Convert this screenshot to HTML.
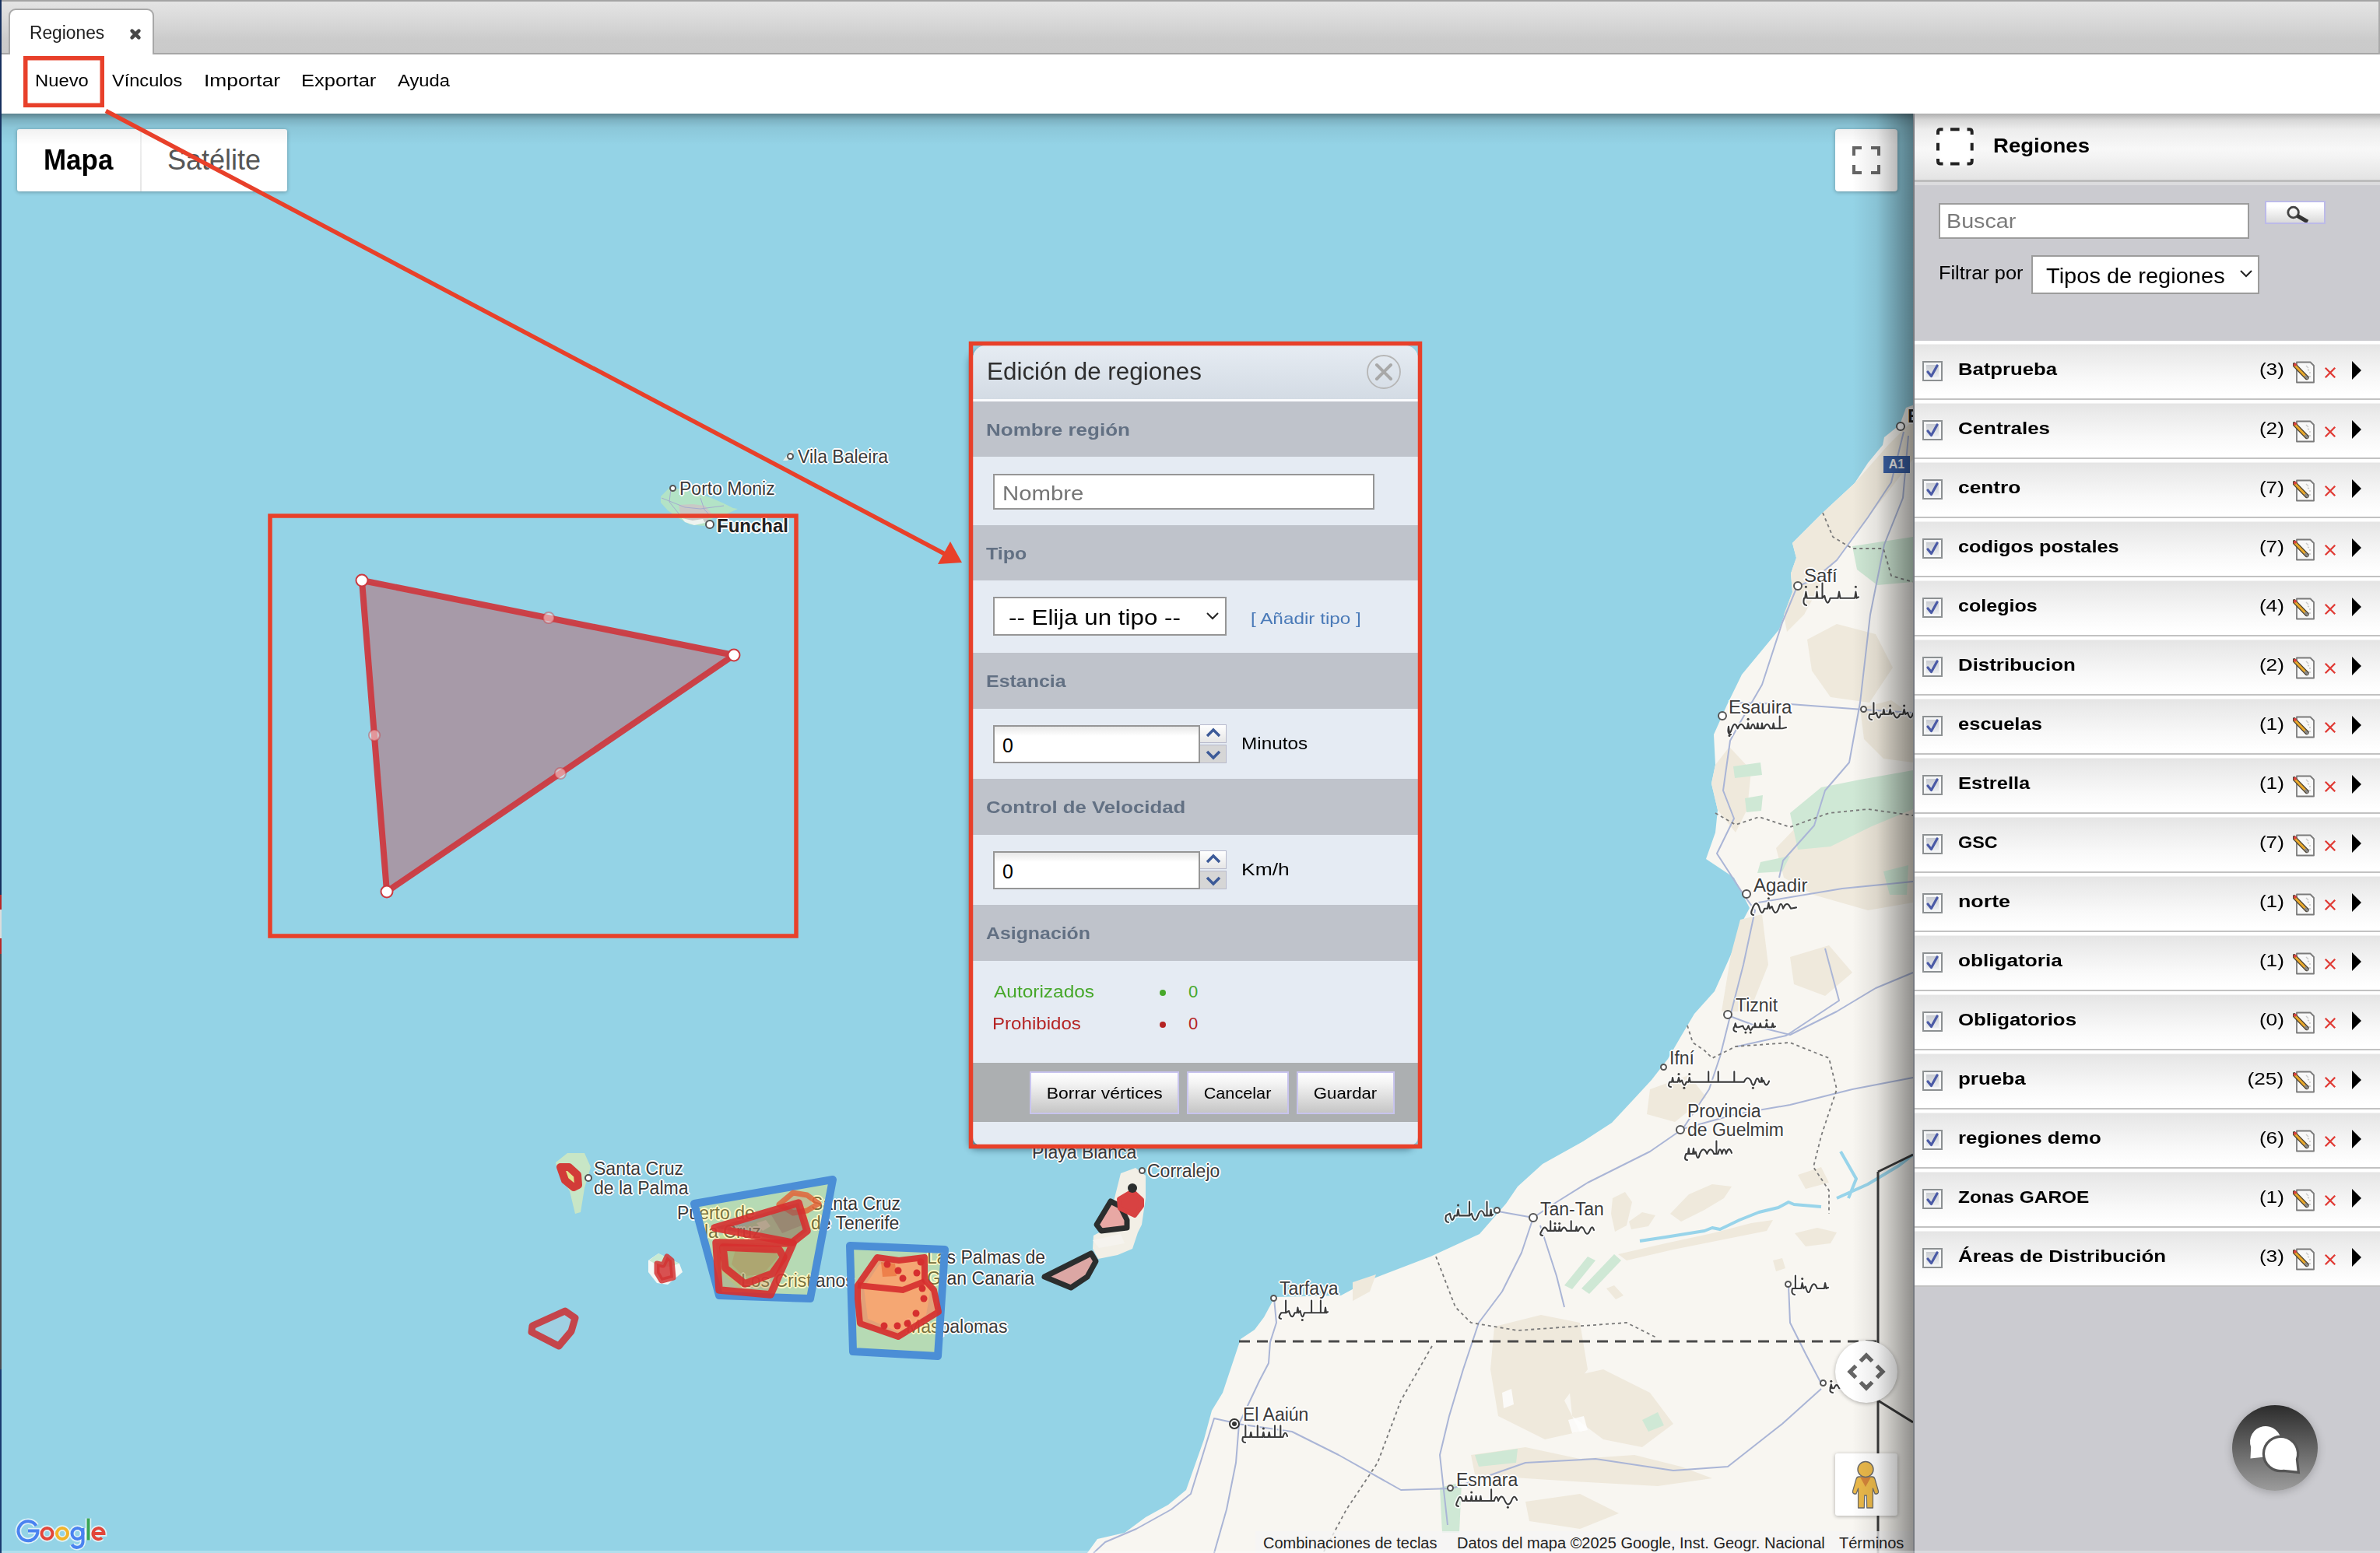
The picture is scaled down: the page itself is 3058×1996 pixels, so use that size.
<!DOCTYPE html>
<html><head><meta charset="utf-8">
<style>
*{margin:0;padding:0;box-sizing:border-box}
html,body{width:3058px;height:1996px;overflow:hidden;background:#fff;font-family:"Liberation Sans",sans-serif;position:relative;color:#000}
.a{position:absolute}
.t{position:absolute;white-space:nowrap;line-height:1}
.row{position:absolute;left:2460px;width:598px;height:76px;background:linear-gradient(#fff 0px,#fff 4px,#e5e5e5 5px,#ececec 20px,#f8f8f8 48px,#fff 70px);border-bottom:2px solid #c2c2c2}
.row .cb{position:absolute;left:10px;top:26px;width:26px;height:26px;border:2px solid #8c9092;background:#f4f5f6}
.row .cb i{position:absolute;left:3px;top:3px;width:16px;height:16px;background:linear-gradient(#c9ccd2,#eceef0)}
.row .cb svg{position:absolute;left:0;top:0}
.row .nm{position:absolute;left:55.5px;top:25.5px;font-size:22.5px;font-weight:bold;white-space:nowrap;line-height:1;transform:scaleX(1.156);transform-origin:0 0}
.row .ct{position:absolute;right:123.5px;top:26px;font-size:22px;white-space:nowrap;line-height:1;transform:scaleX(1.19);transform-origin:100% 0}
.row .ed{position:absolute;left:486px;top:26px}
.row .xx{position:absolute;left:526px;top:33px;width:16px;height:16px}
.row .ar{position:absolute;left:562px;top:26px;width:0;height:0;border-top:12.7px solid transparent;border-bottom:12.7px solid transparent;border-left:12px solid #000}
.band{position:absolute;left:1250px;width:572px;background:#bfc3cb}
.cont{position:absolute;left:1250px;width:572px;background:#e5ebf3}
.lbl{position:absolute;left:1267px;font-size:22px;font-weight:bold;color:#627083;white-space:nowrap;line-height:1}
.btn{position:absolute;top:1377px;height:55px;border:2px solid #c8c4ee;background:linear-gradient(#fff 0%,#f4f4f4 25%,#c6c6c6 100%);font-size:21px;text-align:center;line-height:51px;color:#000;white-space:nowrap}
.ml{position:absolute;white-space:nowrap;line-height:1;font-size:23px;color:#3a3a3a;text-shadow:-2px 0 #fff,2px 0 #fff,0 -2px #fff,0 2px #fff,-1px -1px #fff,1px 1px #fff,-1px 1px #fff,1px -1px #fff}
.mlb{font-weight:bold;color:#222}
.dot{position:absolute;width:10px;height:10px;border:2px solid #555;border-radius:50%;background:#fff}
</style></head><body>
<div class="a" style="left:0;top:0;width:2px;height:1996px;background:linear-gradient(#17305e 0,#17305e 1150px,#b82828 1150px,#b82828 1169px,#dcdcdc 1169px,#dcdcdc 1206px,#b82828 1206px,#b82828 1226px,#4a4a50 1226px,#4a4a50 1760px,#1a3a70 1760px);z-index:50"></div>
<div class="a" style="left:2px;top:0;width:3056px;height:70px;background:linear-gradient(#e4e4e4,#d6d6d6 45%,#cbcbcb 75%,#cacaca);border-top:2px solid #a4a4a4;border-bottom:2px solid #a6a6a6;border-right:2px solid #aaa"></div>
<div class="a" style="left:11px;top:11px;width:187px;height:61px;background:#fff;border:2px solid #a8a8a8;border-bottom:none;border-radius:9px 9px 0 0"></div>
<div class="t" style="transform:scaleX(0.969);transform-origin:0 0;left:38px;top:31px;font-size:23.5px;color:#1e1e1e">Regiones</div>
<svg class="a" style="left:165px;top:35px;filter:blur(.45px)" width="18" height="18" viewBox="0 0 18 18"><path d="M4.6 4.6L13.4 13.4M13.4 4.6L4.6 13.4" stroke="#474747" stroke-width="4.6" stroke-linecap="round"/></svg>
<div class="a" style="left:2px;top:70px;width:3056px;height:76px;background:#fff"></div>
<div class="t" style="transform:scaleX(1.081);transform-origin:0 0;left:45px;top:93px;font-size:22px">Nuevo</div>
<div class="t" style="transform:scaleX(1.071);transform-origin:0 0;left:144px;top:93px;font-size:22px">Vínculos</div>
<div class="t" style="transform:scaleX(1.198);transform-origin:0 0;left:262px;top:93px;font-size:22px">Importar</div>
<div class="t" style="transform:scaleX(1.159);transform-origin:0 0;left:387px;top:93px;font-size:22px">Exportar</div>
<div class="t" style="transform:scaleX(1.079);transform-origin:0 0;left:511px;top:93px;font-size:22px">Ayuda</div>
<div id="map" class="a" style="left:2px;top:146px;width:2458px;height:1850px;background:#94d3e6;overflow:hidden">
<svg class="a" style="left:0;top:0" width="2458" height="1850" viewBox="2 146 2458 1850">
<!-- Africa land -->
<path fill="#f8f6f1" d="M2460 520 L2449 524 L2441 546 L2421 562 L2419 572 L2400 595 L2383 621 L2342 659 L2303 698 L2308 717 L2301 737 L2303 761 L2286 809 L2238 867 L2219 906 L2202 944 L2204 983 L2199 1007 L2207 1041 L2204 1070 L2192 1104 L2228 1128 L2248 1167 L2240 1182 L2236 1200 L2224 1227 L2203 1274 L2177 1303 L2161 1330 L2143 1361 L2122 1388 L2098 1414 L2071 1443 L2034 1467 L1982 1496 L1950 1525 L1935 1547 L1901 1586 L1838 1615 L1760 1645 L1723 1665 L1638 1667 L1624 1693 L1612 1709 L1594 1721 L1584 1751 L1571 1790 L1557 1813 L1547 1850 L1524 1915 L1501 1934 L1472 1950 L1445 1970 L1410 1978 L1397 1996 L2460 1996 Z"/>
<!-- beige patches -->
<g fill="#efe9dc">
<path d="M2303 698 L2342 659 L2383 621 L2426 572 L2458 540 L2458 590 L2420 640 L2380 690 L2345 740 L2318 790 L2296 812 L2292 790 L2303 761 L2301 737 L2308 717 Z"/>
<path d="M2322 822 L2360 802 L2410 815 L2432 858 L2402 903 L2352 896 L2328 862 Z"/>
<path d="M2390 910 L2430 900 L2458 920 L2458 980 L2420 975 L2395 950 Z"/>
<path d="M2204 983 L2222 960 L2250 990 L2245 1040 L2230 1070 L2207 1041 L2199 1007 Z"/>
<path d="M2282 1090 L2330 1040 L2400 1052 L2458 1030 L2458 1160 L2400 1170 L2330 1150 L2292 1128 Z"/>
<path d="M2236 1182 L2264 1175 L2272 1240 L2248 1300 L2212 1300 L2224 1227 Z"/>
<path d="M2300 1230 L2350 1215 L2380 1250 L2345 1280 L2305 1265 Z"/>
<path d="M2120 1400 L2170 1382 L2192 1410 L2152 1442 L2116 1432 Z"/>
<path d="M2146 1560 L2170 1535 L2200 1522 L2225 1525 L2215 1540 L2190 1555 L2160 1570 Z"/>
<path d="M2093 1570 L2110 1558 L2127 1562 L2118 1576 L2096 1580 Z"/>
<path d="M2072 1540 L2088 1532 L2097 1545 L2090 1575 L2075 1583 L2070 1560 Z"/>
<path d="M2306 1585 L2335 1578 L2360 1584 L2352 1598 L2320 1602 Z"/>
<path d="M2278 1620 L2290 1617 L2294 1630 L2282 1634 Z"/>
<path d="M2064 1656 L2074 1652 L2086 1665 L2076 1670 Z"/>
<path d="M2079 1612 L2140 1598 L2200 1585 L2250 1572 L2278 1568 L2270 1582 L2220 1592 L2150 1606 L2090 1620 Z"/>
<path d="M2310 1510 L2340 1500 L2350 1520 L2320 1528 Z"/>
<path d="M1738 1648 L1768 1638 L1760 1660 L1738 1672 Z"/>
<path d="M1920 1705 L1980 1690 L2030 1700 L2040 1760 L2010 1800 L2030 1840 L1985 1850 L1925 1820 L1915 1760 Z"/>
<path d="M2015 1770 L2060 1760 L2120 1790 L2150 1830 L2110 1860 L2060 1850 L2020 1820 Z"/>
<path d="M1890 1870 L1960 1860 L2030 1875 L2100 1870 L2160 1885 L2200 1900 L2130 1910 L2040 1905 L1960 1900 L1895 1895 Z"/>
<path d="M1960 1930 L2030 1920 L2080 1945 L2030 1965 L1965 1955 Z"/>

</g>
<g fill="#ffffff" opacity=".8">
<path d="M1930 1790 L1942 1785 L1945 1805 L1932 1810 Z"/>
<path d="M2015 1825 L2035 1820 L2040 1838 L2020 1842 Z"/>
</g>
<!-- green patches -->
<g fill="#cfe8d5">
<path d="M2380 702 L2458 690 L2458 748 L2412 752 L2386 732 Z"/>
<path d="M2227 985 L2262 980 L2264 996 L2229 1000 Z"/>
<path d="M2242 1026 L2265 1022 L2263 1042 L2244 1044 Z"/>
<path d="M2300 1045 L2340 1012 L2390 1002 L2458 990 L2458 1040 L2405 1062 L2352 1088 L2310 1092 Z"/>
<path d="M2262 1108 L2300 1100 L2290 1120 L2258 1122 Z"/>
<path d="M2420 1120 L2452 1112 L2450 1150 L2428 1150 Z"/>
<path d="M2010 1652 L2040 1615 L2050 1620 L2020 1657 Z"/>
<path d="M2032 1656 L2074 1612 L2083 1620 L2042 1663 Z"/>
<path d="M1850 1912 L1878 1905 L1875 1970 L1853 1970 Z"/>
<path d="M1895 1870 L1950 1862 L1948 1880 L1900 1885 Z"/>
<path d="M2110 1825 L2130 1815 L2138 1832 L2118 1840 Z"/>
</g>
<!-- roads -->
<g fill="none" stroke="#aab5d6" stroke-width="2" stroke-linejoin="round">
<path d="M2446 555 L2430 620 L2400 665 L2360 720 L2330 745 L2309 754 L2290 800 L2264 880 L2235 930 L2223 952 L2214 1016 L2228 1052 L2206 1097 L2241 1151 L2255 1170 L2240 1240 L2222 1310 L2210 1358 L2196 1400 L2162 1451"/>
<path d="M2452 560 L2445 640 L2421 700 L2403 790 L2390 903 L2376 980 L2345 1016 L2331 1061 L2291 1106 L2286 1128"/>
<path d="M2223 903 L2300 905 L2394 912 L2458 916"/>
<path d="M2259 1160 L2367 1142 L2458 1133"/>
<path d="M2345 1219 L2363 1286 L2295 1331 L2232 1345"/>
<path d="M2220 1305 L2260 1320 L2300 1330 L2360 1300 L2410 1270 L2458 1250"/>
<path d="M2162 1451 L2120 1480 L2080 1500 L2040 1520 L2000 1545 L1970 1565 L1925 1557"/>
<path d="M2162 1451 L2230 1432 L2300 1420 L2380 1400 L2458 1385"/>
<path d="M1970 1565 L1955 1610 L1930 1660 L1900 1700 L1880 1760 L1862 1820 L1850 1870 L1860 1960"/>
<path d="M1637 1669 L1640 1700 L1632 1725 L1630 1752 L1618 1775 L1610 1792 L1592 1830 L1588 1880 L1576 1940 L1560 1996"/>
<path d="M1592 1830 L1560 1823 L1550 1855 L1530 1920 L1505 1940 L1460 1965 L1420 1982 L1405 1996"/>
<path d="M1590 1830 L1660 1840 L1720 1870 L1800 1915 L1866 1913"/>
<path d="M1866 1913 L1960 1880 L2050 1875 L2150 1890 L2220 1885 L2290 1830 L2340 1785"/>
<path d="M2298 1651 L2300 1700 L2320 1740 L2340 1778"/>
<path d="M1979 1575 L2000 1640 L2010 1680"/>
</g>
<!-- rivers -->
<g fill="none" stroke="#98d4ea" stroke-width="4" stroke-linejoin="round">
<path d="M2107 1595 L2140 1590 L2190 1582 L2200 1578 L2210 1580 L2235 1568 L2260 1558 L2285 1552 L2298 1545 L2305 1548 L2340 1551 M2365 1480 L2385 1515 L2375 1540 M2360 1540 L2400 1522 L2440 1498 L2458 1484"/>
</g>
<!-- dotted borders -->
<g fill="none" stroke="#7a7a7a" stroke-width="1.8" stroke-dasharray="4 4">
<path d="M2342 659 L2355 690 L2380 705 L2420 705 L2430 740 L2458 748"/>
<path d="M2204 1045 L2230 1060 L2260 1050 L2300 1063 L2350 1045 L2400 1040 L2458 1048"/>
<path d="M2168 1318 L2175 1340 L2190 1350 L2200 1360 L2230 1345 L2300 1340 L2350 1360 L2360 1400 L2340 1460 L2330 1500 L2350 1530 L2350 1560"/>
<path d="M1845 1615 L1870 1680 L1890 1700 L1950 1710 L2020 1705 L2090 1700 L2130 1720"/>
<path d="M1840 1730 L1800 1800 L1770 1880 L1730 1940 L1700 1996"/>
</g>
<!-- dashed national border -->
<path d="M1592 1724 L2413 1724" stroke="#4a4a4a" stroke-width="3" stroke-dasharray="14 9" fill="none"/>
<path d="M2413 1506 L2413 1996" stroke="#3a3a3a" stroke-width="3" fill="none"/>
<path d="M2413 1506 L2458 1484" stroke="#3a3a3a" stroke-width="3" fill="none"/>
<path d="M2413 1800 L2458 1828" stroke="#3a3a3a" stroke-width="3" fill="none"/>

<!-- Madeira + Porto Santo -->
<path fill="#b3e3c6" d="M849 638 L861 626 L880 630 L900 635 L914 640 L930 647 L942 653 L948 654 L935 660 L916 666 L905 676 L886 674 L872 666 L858 656 L849 646 Z"/>
<path fill="#c9c9c6" d="M872 649 L890 648 L906 650 L914 660 L908 671 L895 673 L882 668 L874 660 Z"/>
<path fill="#eef3f0" d="M876 666 L890 669 L903 667 L906 672 L892 675 L880 671 Z"/>
<path fill="none" stroke="#a4acd0" stroke-width="1" d="M850 640 L880 652 L900 654 L930 650 M862 628 L860 645 L872 660 M900 640 L905 655 L915 665"/>
<path fill="#e8efe8" d="M1006 592 L1012 584 L1018 578 L1020 582 L1012 592 Z"/>
<!-- Canary islands land -->
<path fill="#c8e6c6" d="M714 1494 L729 1482 L751 1482 L759 1500 L751 1527 L746 1558 L739 1560 L732 1531 L716 1504 Z"/>
<path fill="#f4f8f6" d="M833 1620 L846 1611 L873 1624 L877 1635 L858 1651 L844 1649 L833 1635 Z"/><path fill="#c8ead2" d="M834 1620 L846 1611 L873 1624 L860 1628 L845 1626 Z"/>
<path fill="#f2efe6" d="M1440 1508 L1459 1501 L1472 1511 L1472 1540 L1467 1574 L1462 1584 L1455 1605 L1436 1613 L1411 1618 L1404 1605 L1405 1588 L1418 1581 L1431 1544 Z"/>
<path fill="#f5f3ee" d="M1404 1594 L1440 1586 L1445 1598 L1412 1604 Z"/>

<path fill="#a9d9bb" d="M925 1588 L975 1568 L1020 1548 L1042 1552 L1032 1586 L1002 1610 L988 1642 L950 1656 L922 1632 Z"/>
<path fill="#b49a80" opacity=".7" d="M945 1606 L990 1602 L1000 1615 L980 1638 L955 1640 L940 1625 Z"/>
<path fill="#8a6878" opacity=".5" d="M990 1560 L1025 1552 L1030 1575 L1005 1585 Z"/>
<path fill="#e9f2e9" d="M972 1572 l12 -4 l6 8 l-10 6 z"/>
<path fill="#dcecd6" d="M1110 1655 L1130 1625 L1180 1620 L1195 1660 L1190 1690 L1155 1712 L1115 1695 Z"/>
</svg>
</div>
<!-- map labels -->
<div class="dot" style="left:1011px;top:582px;width:9px;height:9px"></div>
<div class="ml" style="left:1025px;top:576px">Vila Baleira</div>
<div class="dot" style="left:860px;top:623px;width:9px;height:9px"></div>
<div class="ml" style="left:873px;top:617px">Porto Moniz</div>
<div class="dot" style="left:906px;top:668px;width:12px;height:12px"></div>
<div class="ml mlb" style="left:921px;top:664px;font-size:24px">Funchal</div>
<div class="dot" style="left:751px;top:1509px;width:10px;height:10px"></div>
<div class="ml" style="left:763px;top:1491px">Santa Cruz</div>
<div class="ml" style="left:763px;top:1516px">de la Palma</div>
<div class="ml" style="left:870px;top:1548px">Puerto de</div>
<div class="ml" style="left:905px;top:1572px">la Cruz</div>
<div class="ml" style="left:1042px;top:1536px;color:#333">Santa Cruz</div>
<div class="ml" style="left:1042px;top:1561px;color:#333">de Tenerife</div>
<div class="ml" style="left:952px;top:1635px">Los Cristianos</div>
<div class="ml" style="left:1191px;top:1605px;color:#333">Las Palmas de</div>
<div class="ml" style="left:1191px;top:1632px;color:#333">Gran Canaria</div>
<div class="ml" style="left:1164px;top:1694px">Maspalomas</div>
<div class="ml" style="left:1326px;top:1470px">Playa Blanca</div>
<div class="dot" style="left:1463px;top:1500px;width:9px;height:9px"></div>
<div class="ml" style="left:1474px;top:1494px">Corralejo</div>

<div class="dot" style="left:2304px;top:747px;width:12px;height:12px"></div>
<div class="ml" style="left:2318px;top:728px;font-size:24px">Safí</div>
<div class="dot" style="left:2207px;top:914px;width:12px;height:12px"></div>
<div class="ml" style="left:2221px;top:897px;font-size:24px">Esauira</div>
<div class="dot" style="left:2238px;top:1143px;width:12px;height:12px"></div>
<div class="ml" style="left:2253px;top:1126px;font-size:24px">Agadir</div>
<div class="dot" style="left:2214px;top:1298px;width:12px;height:12px"></div>
<div class="ml" style="left:2230px;top:1281px">Tiznit</div>
<div class="dot" style="left:2133px;top:1367px;width:9px;height:9px"></div>
<div class="ml" style="left:2145px;top:1349px">Ifní</div>
<div class="ml" style="left:2168px;top:1417px">Provincia</div>
<div class="dot" style="left:2153px;top:1446px;width:12px;height:12px"></div>
<div class="ml" style="left:2168px;top:1441px">de Guelmim</div>
<div class="dot" style="left:1964px;top:1559px;width:12px;height:12px"></div>
<div class="ml" style="left:1979px;top:1543px">Tan-Tan</div>
<div class="dot" style="left:1919px;top:1551px;width:9px;height:9px"></div>
<div class="dot" style="left:1632px;top:1664px;width:9px;height:9px"></div>
<div class="ml" style="left:1644px;top:1645px">Tarfaya</div>
<div class="a" style="left:1579px;top:1823px;width:14px;height:14px;border:2px solid #333;border-radius:50%;background:#fff"><div class="a" style="left:2px;top:2px;width:6px;height:6px;border-radius:50%;background:#333"></div></div>
<div class="ml" style="left:1597px;top:1807px">El Aaiún</div>
<div class="dot" style="left:1859px;top:1908px;width:9px;height:9px"></div>
<div class="ml" style="left:1871px;top:1891px">Esmara</div>
<div class="dot" style="left:2293px;top:1646px;width:9px;height:9px"></div>
<div class="dot" style="left:2338px;top:1773px;width:9px;height:9px"></div>
<div class="dot" style="left:2390px;top:907px;width:9px;height:9px"></div>
<div class="dot" style="left:2436px;top:542px;width:12px;height:12px"></div>
<div class="ml mlb" style="left:2451px;top:523px;font-size:24px">E</div>
<div class="a" style="left:2420px;top:586px;width:34px;height:22px;background:#3b62a8;color:#f4f4f4;font-size:16px;font-weight:bold;line-height:22px;text-align:center">A1</div>
<!-- arabic -->
<svg class="a" style="left:0;top:0" width="3058" height="1996">
<path d="M2388.0 767.3 L2385.6 768.7 L2384.4 760.6 L2383.2 768.7 L2380.0 768.7 L2372.7 768.7 L2367.3 768.7 L2364.5 768.7 L2363.0 760.6 L2361.6 768.7 L2357.8 768.7 L2351.6 768.7 Q2347.9 781.8 2344.3 765.8 L2341.5 768.7 M2341.5 768.7 L2341.5 749.6 M2341.5 768.7 L2337.3 768.7 L2335.4 768.7 L2334.5 760.6 L2333.6 768.7 L2331.1 768.7 L2324.2 768.7 L2321.7 768.7 L2320.4 760.6 L2319.2 768.7 L2318.0 768.7 Q2316.0 777.4 2321.0 778.0 M2295.0 935.1 L2289.8 936.3 L2286.7 936.3 M2286.7 936.3 L2286.7 920.5 M2286.7 936.3 L2281.9 936.3 L2279.8 936.3 L2278.7 929.6 L2277.6 936.3 L2274.6 936.3 Q2270.5 925.5 2266.4 936.3 L2264.8 936.3 L2264.0 929.6 L2263.3 936.3 L2261.2 936.3 L2259.3 936.3 L2258.4 929.6 L2257.4 936.3 L2254.9 936.3 Q2252.3 925.5 2249.7 936.3 L2247.3 936.3 L2246.1 929.6 L2244.9 936.3 L2241.7 936.3 Q2237.1 925.5 2232.6 936.3 Q2228.9 925.5 2225.3 936.3 Q2222.0 947.1 2221.0 933.9 Q2219.0 943.5 2224.0 944.0 M2308.0 1166.4 L2300.9 1167.7 Q2296.0 1156.0 2291.1 1167.7 Q2288.2 1156.0 2285.3 1167.7 Q2281.0 1179.4 2276.7 1165.1 L2273.9 1167.7 L2272.4 1160.4 L2271.0 1167.7 L2267.1 1167.7 Q2263.6 1179.4 2260.0 1165.1 Q2255.9 1156.0 2251.8 1167.7 Q2248.0 1175.5 2253.0 1176.0 M2458.0 916.9 Q2454.5 927.9 2451.1 915.8 L2448.1 918.0 L2446.6 911.8 L2445.1 918.0 L2441.1 918.0 Q2436.9 927.9 2432.7 915.8 L2430.0 918.0 L2428.6 911.8 L2427.3 918.0 L2423.7 918.0 L2421.5 918.0 L2420.4 911.8 L2419.3 918.0 L2416.4 918.0 Q2413.7 927.9 2410.9 915.8 L2407.4 918.0 M2407.4 918.0 L2407.4 903.4 M2407.4 918.0 L2402.2 918.0 Q2400.0 924.6 2405.0 925.0 M2281.0 1319.3 L2278.8 1320.2 L2277.7 1315.2 L2276.6 1320.2 L2273.7 1320.2 L2271.1 1320.2 L2269.9 1315.2 L2268.6 1320.2 L2265.2 1320.2 L2262.9 1320.2 L2261.8 1315.2 L2260.6 1320.2 L2257.6 1320.2 L2255.8 1320.2 L2255.0 1315.2 L2254.1 1320.2 L2251.8 1320.2 Q2249.2 1328.3 2246.5 1318.4 Q2242.9 1328.3 2239.3 1318.4 L2233.8 1320.2 L2231.2 1320.2 L2229.8 1315.2 L2228.5 1320.2 L2228.0 1320.2 Q2226.0 1325.6 2231.0 1326.0 M2273.0 1389.6 Q2269.4 1399.6 2265.9 1388.6 L2264.3 1390.6 L2263.5 1385.0 L2262.7 1390.6 L2260.6 1390.6 Q2258.0 1381.6 2255.3 1390.6 Q2252.4 1399.6 2249.5 1388.6 Q2245.2 1381.6 2240.9 1390.6 L2232.3 1390.6 L2228.3 1390.6 M2228.3 1390.6 L2228.3 1377.4 M2228.3 1390.6 L2222.4 1390.6 L2215.4 1390.6 L2209.9 1390.6 L2207.7 1390.6 M2207.7 1390.6 L2207.7 1377.4 M2207.7 1390.6 L2204.2 1390.6 L2198.0 1390.6 L2195.2 1390.6 M2195.2 1390.6 L2195.2 1377.4 M2195.2 1390.6 L2191.1 1390.6 L2181.6 1390.6 L2174.1 1390.6 L2171.8 1390.6 L2170.7 1385.0 L2169.6 1390.6 L2166.7 1390.6 Q2163.9 1399.6 2161.0 1388.6 L2158.4 1390.6 L2157.0 1385.0 L2155.7 1390.6 L2152.2 1390.6 L2150.1 1390.6 L2149.1 1385.0 L2148.1 1390.6 L2145.4 1390.6 Q2142.0 1396.6 2147.0 1397.0 M2225.0 1481.8 Q2221.5 1471.8 2217.9 1483.0 Q2215.2 1471.8 2212.5 1483.0 Q2209.9 1471.8 2207.4 1483.0 L2205.4 1483.0 M2205.4 1483.0 L2205.4 1466.5 M2205.4 1483.0 L2202.3 1483.0 Q2197.8 1471.8 2193.3 1483.0 Q2188.7 1471.8 2184.0 1483.0 Q2181.4 1494.2 2178.8 1480.5 L2176.9 1483.0 L2176.0 1476.0 L2175.0 1483.0 L2172.5 1483.0 L2170.7 1483.0 L2169.8 1476.0 L2168.9 1483.0 L2166.4 1483.0 Q2163.0 1490.5 2168.0 1491.0 M2048.0 1581.0 Q2045.4 1573.4 2042.7 1581.9 Q2038.9 1590.5 2035.2 1580.0 Q2031.6 1573.4 2028.1 1581.9 L2026.4 1581.9 L2025.5 1576.6 L2024.7 1581.9 L2022.3 1581.9 L2018.7 1581.9 M2018.7 1581.9 L2018.7 1569.4 M2018.7 1581.9 L2013.2 1581.9 Q2009.6 1573.4 2006.0 1581.9 L2004.4 1581.9 L2003.7 1576.6 L2002.9 1581.9 L2000.8 1581.9 L1999.0 1581.9 L1998.0 1576.6 L1997.1 1581.9 L1994.6 1581.9 L1992.2 1581.9 M1992.2 1581.9 L1992.2 1569.4 M1992.2 1581.9 L1988.5 1581.9 Q1984.8 1573.4 1981.0 1581.9 Q1977.0 1587.6 1982.0 1588.0 M1918.0 1561.0 L1916.4 1562.4 L1915.6 1554.8 L1914.7 1562.4 L1912.6 1562.4 L1910.5 1562.4 M1910.5 1562.4 L1910.5 1544.5 M1910.5 1562.4 L1907.5 1562.4 Q1903.2 1550.2 1898.9 1562.4 Q1894.8 1574.5 1890.8 1559.7 L1888.0 1562.4 M1888.0 1562.4 L1888.0 1544.5 M1888.0 1562.4 L1883.9 1562.4 L1877.4 1562.4 L1874.8 1562.4 L1873.5 1554.8 L1872.2 1562.4 L1868.8 1562.4 Q1865.8 1574.5 1862.9 1559.7 L1858.0 1562.4 Q1856.0 1570.5 1861.0 1571.0 M1706.0 1686.1 L1704.0 1687.3 L1703.0 1680.6 L1702.1 1687.3 L1699.4 1687.3 L1696.9 1687.3 M1696.9 1687.3 L1696.9 1671.5 M1696.9 1687.3 L1693.0 1687.3 L1687.5 1687.3 L1685.1 1687.3 M1685.1 1687.3 L1685.1 1671.5 M1685.1 1687.3 L1681.6 1687.3 L1675.9 1687.3 Q1673.3 1698.1 1670.6 1684.9 L1668.5 1687.3 L1667.4 1680.6 L1666.4 1687.3 L1663.5 1687.3 Q1659.8 1698.1 1656.0 1684.9 L1652.1 1687.3 M1652.1 1687.3 L1652.1 1671.5 M1652.1 1687.3 L1646.1 1687.3 Q1641.0 1694.5 1646.0 1695.0 M1654.0 1845.9 Q1651.2 1837.1 1648.4 1847.0 L1645.3 1847.0 M1645.3 1847.0 L1645.3 1832.4 M1645.3 1847.0 L1640.6 1847.0 L1638.0 1847.0 M1638.0 1847.0 L1638.0 1832.4 M1638.0 1847.0 L1634.1 1847.0 L1631.8 1847.0 L1630.7 1840.8 L1629.6 1847.0 L1626.6 1847.0 L1624.5 1847.0 L1623.4 1840.8 L1622.3 1847.0 L1619.4 1847.0 L1615.8 1847.0 M1615.8 1847.0 L1615.8 1832.4 M1615.8 1847.0 L1610.5 1847.0 L1608.4 1847.0 L1607.3 1840.8 L1606.2 1847.0 L1603.4 1847.0 L1600.3 1847.0 M1600.3 1847.0 L1600.3 1832.4 M1600.3 1847.0 L1597.0 1847.0 Q1595.0 1853.6 1600.0 1854.0 M1949.0 1927.9 Q1945.5 1919.1 1942.0 1929.0 Q1937.4 1938.9 1932.7 1926.8 Q1928.9 1919.1 1925.1 1929.0 Q1922.5 1919.1 1919.9 1929.0 L1916.1 1929.0 M1916.1 1929.0 L1916.1 1914.4 M1916.1 1929.0 L1910.3 1929.0 L1905.0 1929.0 L1903.3 1929.0 L1902.4 1922.8 L1901.5 1929.0 L1899.2 1929.0 L1897.4 1929.0 L1896.6 1922.8 L1895.7 1929.0 L1893.4 1929.0 L1891.6 1929.0 L1890.7 1922.8 L1889.7 1929.0 L1887.3 1929.0 L1884.8 1929.0 L1883.6 1922.8 L1882.4 1929.0 L1879.1 1929.0 Q1876.0 1919.1 1872.8 1929.0 Q1869.0 1935.6 1874.0 1936.0 M2349.0 1654.8 L2346.4 1656.0 L2345.1 1649.0 L2343.8 1656.0 L2340.3 1656.0 L2334.8 1656.0 Q2330.7 1644.8 2326.6 1656.0 Q2323.3 1667.2 2319.9 1653.5 L2317.1 1656.0 L2315.7 1649.0 L2314.3 1656.0 L2310.5 1656.0 L2306.9 1656.0 M2306.9 1656.0 L2306.9 1639.5 M2306.9 1656.0 L2303.0 1656.0 Q2301.0 1663.5 2306.0 1664.0 M2369.0 1783.3 L2363.1 1784.2 Q2359.8 1776.1 2356.6 1784.2 L2354.0 1784.2 L2352.8 1779.2 L2351.5 1784.2 L2352.0 1784.2 Q2350.0 1789.6 2355.0 1790.0" fill="none" stroke="#fff" stroke-width="5.5" stroke-linecap="round" stroke-linejoin="round" opacity=".85"/>
<path d="M2388.0 767.3 L2385.6 768.7 L2384.4 760.6 L2383.2 768.7 L2380.0 768.7 L2372.7 768.7 L2367.3 768.7 L2364.5 768.7 L2363.0 760.6 L2361.6 768.7 L2357.8 768.7 L2351.6 768.7 Q2347.9 781.8 2344.3 765.8 L2341.5 768.7 M2341.5 768.7 L2341.5 749.6 M2341.5 768.7 L2337.3 768.7 L2335.4 768.7 L2334.5 760.6 L2333.6 768.7 L2331.1 768.7 L2324.2 768.7 L2321.7 768.7 L2320.4 760.6 L2319.2 768.7 L2318.0 768.7 Q2316.0 777.4 2321.0 778.0 M2295.0 935.1 L2289.8 936.3 L2286.7 936.3 M2286.7 936.3 L2286.7 920.5 M2286.7 936.3 L2281.9 936.3 L2279.8 936.3 L2278.7 929.6 L2277.6 936.3 L2274.6 936.3 Q2270.5 925.5 2266.4 936.3 L2264.8 936.3 L2264.0 929.6 L2263.3 936.3 L2261.2 936.3 L2259.3 936.3 L2258.4 929.6 L2257.4 936.3 L2254.9 936.3 Q2252.3 925.5 2249.7 936.3 L2247.3 936.3 L2246.1 929.6 L2244.9 936.3 L2241.7 936.3 Q2237.1 925.5 2232.6 936.3 Q2228.9 925.5 2225.3 936.3 Q2222.0 947.1 2221.0 933.9 Q2219.0 943.5 2224.0 944.0 M2308.0 1166.4 L2300.9 1167.7 Q2296.0 1156.0 2291.1 1167.7 Q2288.2 1156.0 2285.3 1167.7 Q2281.0 1179.4 2276.7 1165.1 L2273.9 1167.7 L2272.4 1160.4 L2271.0 1167.7 L2267.1 1167.7 Q2263.6 1179.4 2260.0 1165.1 Q2255.9 1156.0 2251.8 1167.7 Q2248.0 1175.5 2253.0 1176.0 M2458.0 916.9 Q2454.5 927.9 2451.1 915.8 L2448.1 918.0 L2446.6 911.8 L2445.1 918.0 L2441.1 918.0 Q2436.9 927.9 2432.7 915.8 L2430.0 918.0 L2428.6 911.8 L2427.3 918.0 L2423.7 918.0 L2421.5 918.0 L2420.4 911.8 L2419.3 918.0 L2416.4 918.0 Q2413.7 927.9 2410.9 915.8 L2407.4 918.0 M2407.4 918.0 L2407.4 903.4 M2407.4 918.0 L2402.2 918.0 Q2400.0 924.6 2405.0 925.0 M2281.0 1319.3 L2278.8 1320.2 L2277.7 1315.2 L2276.6 1320.2 L2273.7 1320.2 L2271.1 1320.2 L2269.9 1315.2 L2268.6 1320.2 L2265.2 1320.2 L2262.9 1320.2 L2261.8 1315.2 L2260.6 1320.2 L2257.6 1320.2 L2255.8 1320.2 L2255.0 1315.2 L2254.1 1320.2 L2251.8 1320.2 Q2249.2 1328.3 2246.5 1318.4 Q2242.9 1328.3 2239.3 1318.4 L2233.8 1320.2 L2231.2 1320.2 L2229.8 1315.2 L2228.5 1320.2 L2228.0 1320.2 Q2226.0 1325.6 2231.0 1326.0 M2273.0 1389.6 Q2269.4 1399.6 2265.9 1388.6 L2264.3 1390.6 L2263.5 1385.0 L2262.7 1390.6 L2260.6 1390.6 Q2258.0 1381.6 2255.3 1390.6 Q2252.4 1399.6 2249.5 1388.6 Q2245.2 1381.6 2240.9 1390.6 L2232.3 1390.6 L2228.3 1390.6 M2228.3 1390.6 L2228.3 1377.4 M2228.3 1390.6 L2222.4 1390.6 L2215.4 1390.6 L2209.9 1390.6 L2207.7 1390.6 M2207.7 1390.6 L2207.7 1377.4 M2207.7 1390.6 L2204.2 1390.6 L2198.0 1390.6 L2195.2 1390.6 M2195.2 1390.6 L2195.2 1377.4 M2195.2 1390.6 L2191.1 1390.6 L2181.6 1390.6 L2174.1 1390.6 L2171.8 1390.6 L2170.7 1385.0 L2169.6 1390.6 L2166.7 1390.6 Q2163.9 1399.6 2161.0 1388.6 L2158.4 1390.6 L2157.0 1385.0 L2155.7 1390.6 L2152.2 1390.6 L2150.1 1390.6 L2149.1 1385.0 L2148.1 1390.6 L2145.4 1390.6 Q2142.0 1396.6 2147.0 1397.0 M2225.0 1481.8 Q2221.5 1471.8 2217.9 1483.0 Q2215.2 1471.8 2212.5 1483.0 Q2209.9 1471.8 2207.4 1483.0 L2205.4 1483.0 M2205.4 1483.0 L2205.4 1466.5 M2205.4 1483.0 L2202.3 1483.0 Q2197.8 1471.8 2193.3 1483.0 Q2188.7 1471.8 2184.0 1483.0 Q2181.4 1494.2 2178.8 1480.5 L2176.9 1483.0 L2176.0 1476.0 L2175.0 1483.0 L2172.5 1483.0 L2170.7 1483.0 L2169.8 1476.0 L2168.9 1483.0 L2166.4 1483.0 Q2163.0 1490.5 2168.0 1491.0 M2048.0 1581.0 Q2045.4 1573.4 2042.7 1581.9 Q2038.9 1590.5 2035.2 1580.0 Q2031.6 1573.4 2028.1 1581.9 L2026.4 1581.9 L2025.5 1576.6 L2024.7 1581.9 L2022.3 1581.9 L2018.7 1581.9 M2018.7 1581.9 L2018.7 1569.4 M2018.7 1581.9 L2013.2 1581.9 Q2009.6 1573.4 2006.0 1581.9 L2004.4 1581.9 L2003.7 1576.6 L2002.9 1581.9 L2000.8 1581.9 L1999.0 1581.9 L1998.0 1576.6 L1997.1 1581.9 L1994.6 1581.9 L1992.2 1581.9 M1992.2 1581.9 L1992.2 1569.4 M1992.2 1581.9 L1988.5 1581.9 Q1984.8 1573.4 1981.0 1581.9 Q1977.0 1587.6 1982.0 1588.0 M1918.0 1561.0 L1916.4 1562.4 L1915.6 1554.8 L1914.7 1562.4 L1912.6 1562.4 L1910.5 1562.4 M1910.5 1562.4 L1910.5 1544.5 M1910.5 1562.4 L1907.5 1562.4 Q1903.2 1550.2 1898.9 1562.4 Q1894.8 1574.5 1890.8 1559.7 L1888.0 1562.4 M1888.0 1562.4 L1888.0 1544.5 M1888.0 1562.4 L1883.9 1562.4 L1877.4 1562.4 L1874.8 1562.4 L1873.5 1554.8 L1872.2 1562.4 L1868.8 1562.4 Q1865.8 1574.5 1862.9 1559.7 L1858.0 1562.4 Q1856.0 1570.5 1861.0 1571.0 M1706.0 1686.1 L1704.0 1687.3 L1703.0 1680.6 L1702.1 1687.3 L1699.4 1687.3 L1696.9 1687.3 M1696.9 1687.3 L1696.9 1671.5 M1696.9 1687.3 L1693.0 1687.3 L1687.5 1687.3 L1685.1 1687.3 M1685.1 1687.3 L1685.1 1671.5 M1685.1 1687.3 L1681.6 1687.3 L1675.9 1687.3 Q1673.3 1698.1 1670.6 1684.9 L1668.5 1687.3 L1667.4 1680.6 L1666.4 1687.3 L1663.5 1687.3 Q1659.8 1698.1 1656.0 1684.9 L1652.1 1687.3 M1652.1 1687.3 L1652.1 1671.5 M1652.1 1687.3 L1646.1 1687.3 Q1641.0 1694.5 1646.0 1695.0 M1654.0 1845.9 Q1651.2 1837.1 1648.4 1847.0 L1645.3 1847.0 M1645.3 1847.0 L1645.3 1832.4 M1645.3 1847.0 L1640.6 1847.0 L1638.0 1847.0 M1638.0 1847.0 L1638.0 1832.4 M1638.0 1847.0 L1634.1 1847.0 L1631.8 1847.0 L1630.7 1840.8 L1629.6 1847.0 L1626.6 1847.0 L1624.5 1847.0 L1623.4 1840.8 L1622.3 1847.0 L1619.4 1847.0 L1615.8 1847.0 M1615.8 1847.0 L1615.8 1832.4 M1615.8 1847.0 L1610.5 1847.0 L1608.4 1847.0 L1607.3 1840.8 L1606.2 1847.0 L1603.4 1847.0 L1600.3 1847.0 M1600.3 1847.0 L1600.3 1832.4 M1600.3 1847.0 L1597.0 1847.0 Q1595.0 1853.6 1600.0 1854.0 M1949.0 1927.9 Q1945.5 1919.1 1942.0 1929.0 Q1937.4 1938.9 1932.7 1926.8 Q1928.9 1919.1 1925.1 1929.0 Q1922.5 1919.1 1919.9 1929.0 L1916.1 1929.0 M1916.1 1929.0 L1916.1 1914.4 M1916.1 1929.0 L1910.3 1929.0 L1905.0 1929.0 L1903.3 1929.0 L1902.4 1922.8 L1901.5 1929.0 L1899.2 1929.0 L1897.4 1929.0 L1896.6 1922.8 L1895.7 1929.0 L1893.4 1929.0 L1891.6 1929.0 L1890.7 1922.8 L1889.7 1929.0 L1887.3 1929.0 L1884.8 1929.0 L1883.6 1922.8 L1882.4 1929.0 L1879.1 1929.0 Q1876.0 1919.1 1872.8 1929.0 Q1869.0 1935.6 1874.0 1936.0 M2349.0 1654.8 L2346.4 1656.0 L2345.1 1649.0 L2343.8 1656.0 L2340.3 1656.0 L2334.8 1656.0 Q2330.7 1644.8 2326.6 1656.0 Q2323.3 1667.2 2319.9 1653.5 L2317.1 1656.0 L2315.7 1649.0 L2314.3 1656.0 L2310.5 1656.0 L2306.9 1656.0 M2306.9 1656.0 L2306.9 1639.5 M2306.9 1656.0 L2303.0 1656.0 Q2301.0 1663.5 2306.0 1664.0 M2369.0 1783.3 L2363.1 1784.2 Q2359.8 1776.1 2356.6 1784.2 L2354.0 1784.2 L2352.8 1779.2 L2351.5 1784.2 L2352.0 1784.2 Q2350.0 1789.6 2355.0 1790.0" fill="none" stroke="#3c3c3c" stroke-width="2.1" stroke-linecap="round" stroke-linejoin="round"/>
<g fill="#3c3c3c"><circle cx="2384.4" cy="754.2" r="1.5"/><circle cx="2334.5" cy="754.2" r="1.5"/><circle cx="2320.4" cy="754.2" r="1.5"/><circle cx="2246.1" cy="924.3" r="1.5"/><circle cx="2222.0" cy="945.4" r="1.5"/><circle cx="2272.4" cy="1154.7" r="1.5"/><circle cx="2446.6" cy="907.0" r="1.5"/><circle cx="2428.6" cy="907.0" r="1.5"/><circle cx="2269.9" cy="1311.2" r="1.5"/><circle cx="2249.2" cy="1327.1" r="1.5"/><circle cx="2242.9" cy="1327.1" r="1.5"/><circle cx="2252.4" cy="1398.2" r="1.5"/><circle cx="2170.7" cy="1380.6" r="1.5"/><circle cx="2163.9" cy="1398.2" r="1.5"/><circle cx="2157.0" cy="1380.6" r="1.5"/><circle cx="2003.7" cy="1572.4" r="1.5"/><circle cx="1998.0" cy="1572.4" r="1.5"/><circle cx="1873.5" cy="1548.9" r="1.5"/><circle cx="1673.3" cy="1696.4" r="1.5"/><circle cx="1623.4" cy="1836.0" r="1.5"/><circle cx="1937.4" cy="1937.3" r="1.5"/><circle cx="1890.7" cy="1918.0" r="1.5"/><circle cx="2315.7" cy="1643.5" r="1.5"/><circle cx="2352.8" cy="1775.2" r="1.5"/></g>
</svg>
<svg class="a" style="left:0;top:0" width="2460" height="1996" viewBox="0 0 2460 1996">
<!-- Tenerife blue quad -->
<path fill="#ffe84a" fill-opacity=".32" stroke="#4b8ed6" stroke-width="10" stroke-linejoin="round" d="M892 1547 L1070 1516 L1041 1669 L924 1665 Z"/>
<path fill="#e06a3a" fill-opacity=".25" stroke="#e0643a" stroke-width="7" stroke-opacity=".85" stroke-linejoin="round" d="M1001 1548 L1019 1533 L1037 1536 L1052 1547 L1037 1556 L1019 1559 Z"/>
<g stroke="#d62f2f" stroke-width="9.5" stroke-linejoin="round" stroke-opacity=".9">
<path fill="#7a5a66" fill-opacity=".5" d="M918 1578 L1026 1546 L1037 1582 L1018 1597 Z"/>
<path fill="#a07a5a" fill-opacity=".3" d="M920 1597 L1019 1598 L990 1664 L924 1658 Z"/>
<path fill="#8a9a70" fill-opacity=".3" d="M929 1603 L1001 1606 L1007 1616 L992 1637 L957 1650 L932 1630 Z"/>
</g>
<!-- Gran Canaria blue quad -->
<path fill="#ffe84a" fill-opacity=".32" stroke="#4b8ed6" stroke-width="10" stroke-linejoin="round" d="M1092 1601 L1214 1606 L1205 1743 L1096 1737 Z"/>
<path fill="#ff7a50" fill-opacity=".6" stroke="#d62f2f" stroke-width="8" stroke-opacity=".92" stroke-linejoin="round" d="M1127 1616 L1155 1620 L1188 1616 L1188 1645 L1200 1658 L1206 1686 L1154 1718 L1105 1701 L1102 1669 L1102 1652 Z"/>
<path fill="none" stroke="#d62f2f" stroke-width="8" stroke-opacity=".92" d="M1102 1652 L1160 1658 L1188 1647"/>
<path fill="#e8602a" opacity=".55" d="M1132 1622 L1150 1624 L1152 1640 L1134 1641 Z"/>
<g fill="#d62f2f">
<circle cx="1140" cy="1625" r="4.5"/><circle cx="1154" cy="1633" r="4.5"/><circle cx="1160" cy="1643" r="4.5"/><circle cx="1178" cy="1636" r="4.5"/><circle cx="1183" cy="1622" r="4.5"/><circle cx="1185" cy="1656" r="4.5"/><circle cx="1187" cy="1669" r="4.5"/><circle cx="1177" cy="1688" r="4.5"/><circle cx="1166" cy="1701" r="4.5"/><circle cx="1153" cy="1704" r="4.5"/><circle cx="1136" cy="1704" r="4.5"/>
</g>
<!-- La Palma region -->
<path fill="#ffe84a" fill-opacity=".45" stroke="#d23c38" stroke-width="10" stroke-linejoin="round" d="M720 1500 L731 1500 L742 1510 L743 1523 L737 1526 L726 1517 Z"/>
<!-- La Gomera region -->
<path fill="#d23434" fill-opacity=".85" stroke="#d23434" stroke-opacity=".85" stroke-width="7" stroke-linejoin="round" d="M844 1624 L852 1626 L857 1615 L863 1620 L865 1642 L850 1646 L844 1636 Z"/>
<!-- El Hierro region -->
<path fill="#a6cfe0" fill-opacity=".6" stroke="#c8383e" stroke-opacity=".92" stroke-width="9" stroke-linejoin="round" d="M684 1704 L726 1685 L739 1694 L734 1711 L718 1730 L683 1712 Z"/>
<!-- Fuerteventura regions -->
<path fill="#e8a8a4" stroke="#2b2e2e" stroke-width="7" stroke-linejoin="round" d="M1409 1574 L1427 1544 L1439 1550 L1448 1568 L1448 1578 L1415 1582 Z"/>
<path fill="#dca7a4" stroke="#2b2e2e" stroke-width="7" stroke-linejoin="round" d="M1342 1641 L1402 1611 L1408 1621 L1397 1641 L1376 1655 Z"/>
<path fill="#d84242" stroke="#d84242" stroke-width="6" stroke-linejoin="round" d="M1438 1541 L1455 1531 L1467 1542 L1467 1550 L1458 1562 L1439 1553 Z"/>
<circle cx="1455" cy="1527" r="6" fill="#2b2e2e"/>
<!-- drawn triangle region -->
<path fill="#c2454b" fill-opacity=".4" stroke="#cc3a40" stroke-width="8" stroke-linejoin="round" stroke-opacity=".95" d="M465 746 L943 842 L497 1146 Z"/>
<g fill="#fff" stroke="#cc3a40" stroke-width="2">
<circle cx="465" cy="746" r="7.5"/><circle cx="943" cy="842" r="7.5"/><circle cx="497" cy="1146" r="7.5"/>
</g>
<g fill="#fff" fill-opacity=".45" stroke="#cc3a40" stroke-opacity=".45" stroke-width="2">
<circle cx="705" cy="794" r="7"/><circle cx="481" cy="945" r="7"/><circle cx="720" cy="994" r="7"/>
</g>
</svg>
<!-- map type -->
<div class="a" style="left:22px;top:166px;width:347px;height:80px;background:#fff;border-radius:3px;box-shadow:0 1px 5px rgba(0,0,0,.3)"></div>
<div class="a" style="left:180px;top:166px;width:2px;height:80px;background:linear-gradient(#f0f0f0,#e6e6e6)"></div>
<div class="t" style="transform:scaleX(0.971);transform-origin:0 0;left:56px;top:188px;font-size:36px;font-weight:bold">Mapa</div>
<div class="t" style="left:215px;top:188px;font-size:36px;color:#565656">Satélite</div>
<!-- fullscreen -->
<div class="a" style="left:2358px;top:166px;width:80px;height:80px;background:#fff;border-radius:4px;box-shadow:0 1px 5px rgba(0,0,0,.3)"></div>
<svg class="a" style="left:2378px;top:186px" width="40" height="40" viewBox="0 0 40 40"><path d="M4 14V4h10M26 4h10v10M36 26v10H26M14 36H4V26" fill="none" stroke="#666" stroke-width="4"/></svg>
<!-- pan control -->
<div class="a" style="left:2358px;top:1723px;width:80px;height:80px;background:#fff;border-radius:50%;box-shadow:0 1px 5px rgba(0,0,0,.3)"></div>
<svg class="a" style="left:2358px;top:1723px" width="80" height="80" viewBox="0 0 80 80"><path d="M32.5 26.5L40 19L47.5 26.5M32.5 53.5L40 61L47.5 53.5M26.5 32.5L19 40L26.5 47.5M53.5 32.5L61 40L53.5 47.5" fill="none" stroke="#666" stroke-width="5.2"/></svg>
<!-- pegman -->
<div class="a" style="left:2358px;top:1868px;width:80px;height:80px;background:#fff;border-radius:3px;box-shadow:0 1px 5px rgba(0,0,0,.3)"></div>
<svg class="a" style="left:2358px;top:1868px" width="80" height="80" viewBox="0 0 80 80">
<g transform="translate(39 0) scale(0.86 1) translate(-39 0)"><path d="M29 30 L49 30 Q52 30 53 33 L58 48 Q59 51 56 52 L53 52 L50 45 L50 70 L41 70 L40.5 54 L37.5 54 L37 70 L28 70 L28 45 L25 52 L22 52 Q19 51 20 48 L25 33 Q26 30 29 30 Z" fill="#ebb94a" stroke="#6a6a6a" stroke-width="1.4" stroke-linejoin="round"/>
<path d="M31 30.5 L47 30.5 L39 43 Z" fill="#d4843a"/></g>
<circle cx="39" cy="20.5" r="10" fill="#ebb94a" stroke="#6a6a6a" stroke-width="1.4"/>
</svg>
<!-- google logo -->
<svg class="a" style="left:0;top:1930px" width="160" height="66" viewBox="0 1930 160 66">
<g fill="none" stroke-linecap="butt">
<g stroke="#fff" stroke-opacity=".7" stroke-width="7.5">
<path d="M46.5 1961 A12.5 12.5 0 1 0 48.5 1967.5 H36"/>
<circle cx="60.5" cy="1971" r="7"/><circle cx="80" cy="1971" r="7"/>
<circle cx="99.5" cy="1971" r="7"/><path d="M106.5 1964 V1982 A7.5 7.5 0 0 1 92.5 1985"/>
<path d="M113.5 1951.5 V1979.5"/>
<path d="M119 1971 H133.5 A7 7 0 1 0 131 1976.5"/>
</g>
<path d="M46.5 1961 A12.5 12.5 0 1 0 48.5 1967.5 H36" stroke="#4a82f0" stroke-width="4"/>
<circle cx="60.5" cy="1971" r="7" stroke="#e2463a" stroke-width="4"/>
<circle cx="80" cy="1971" r="7" stroke="#f2b42a" stroke-width="4"/>
<circle cx="99.5" cy="1971" r="7" stroke="#4a82f0" stroke-width="4"/>
<path d="M106.5 1964 V1982 A7.5 7.5 0 0 1 92.5 1985" stroke="#4a82f0" stroke-width="4"/>
<path d="M113.5 1951.5 V1979.5" stroke="#38a554" stroke-width="4"/>
<path d="M119 1971 H133.5 A7 7 0 1 0 131 1976.5" stroke="#e2463a" stroke-width="4"/>
</g></svg>
<!-- attribution -->
<div class="a" style="left:1613px;top:1968px;width:845px;height:28px;background:rgba(245,245,245,.78)"></div>
<div class="t" style="left:1623px;top:1973px;font-size:20px;color:#222">Combinaciones de teclas</div>
<div class="t" style="left:1872px;top:1973px;font-size:20px;color:#222">Datos del mapa ©2025 Google, Inst. Geogr. Nacional</div>
<div class="t" style="left:2363px;top:1973px;font-size:20px;color:#222">Términos</div>
<!-- map shadows -->
<div class="a" style="left:2px;top:146px;width:2456px;height:40px;background:linear-gradient(rgba(0,0,0,.38),rgba(0,0,0,.16) 8px,rgba(0,0,0,.06) 18px,rgba(0,0,0,0) 40px)"></div>
<div class="a" style="left:2380px;top:146px;width:78px;height:1850px;background:linear-gradient(90deg,rgba(0,0,0,0),rgba(0,0,0,.08) 40%,rgba(0,0,0,.42))"></div>
<!-- SIDEBAR -->
<div class="a" style="left:2458px;top:146px;width:600px;height:1850px;background:#cbcbd0;border-left:2px solid #777a80"></div>
<div class="a" style="left:2460px;top:146px;width:598px;height:85px;background:linear-gradient(#aeaeae 0px,#d6d6d6 8px,#ececec 20px,#f8f8f8 45px,#f4f4f4 55px,#e4e4e4 84px)"></div>
<div class="a" style="left:2460px;top:231px;width:598px;height:3px;background:#bdbdbd"></div>
<div class="a" style="left:2460px;top:234px;width:598px;height:4px;background:#dcdcde"></div>
<div class="a" style="left:2490px;top:167px;width:44px;height:44px;background:#fff;filter:blur(3px)"></div>
<svg class="a" style="left:2486px;top:163px" width="52" height="52" viewBox="0 0 52 52"><path d="M4 10V6.5Q4 3.2 7.3 3.2H10.5M20 3.2H31.6M41.5 3.2H44.4Q47.7 3.2 47.7 6.5V10M47.7 20.7V30.5M47.7 41V44.2Q47.7 47.5 44.4 47.5H41.5M31.6 47.5H20M10.5 47.5H7.3Q4 47.5 4 44.2V41M4 30.5V20.7" fill="none" stroke="#222" stroke-width="4"/></svg>
<div class="t" style="transform:scaleX(1.08);transform-origin:0 0;left:2561px;top:175px;font-size:25.5px;font-weight:bold">Regiones</div>
<div class="a" style="left:2491px;top:261px;width:399px;height:46px;background:#fff;border:2px solid #9c9c9c"></div>
<div class="t" style="transform:scaleX(1.147);transform-origin:0 0;left:2501px;top:272px;font-size:25px;color:#7a7a7a">Buscar</div>
<div class="a" style="left:2910px;top:258px;width:78px;height:30px;border:2px solid #bcbae8;background:linear-gradient(#fff 20%,#dadada)"></div>
<svg class="a" style="left:2936px;top:262px" width="32" height="24" viewBox="0 0 32 24"><circle cx="10.6" cy="11" r="6.8" fill="none" stroke="#444" stroke-width="2.8"/><path d="M16 15.5L29 23" stroke="#333" stroke-width="5"/></svg>
<div class="t" style="transform:scaleX(1.102);transform-origin:0 0;left:2491px;top:340px;font-size:23px">Filtrar por</div>
<div class="a" style="left:2610px;top:328px;width:293px;height:50px;background:#fff;border:2px solid #9c9c9c"></div>
<div class="t" style="transform:scaleX(1.075);transform-origin:0 0;left:2629px;top:342px;font-size:27px">Tipos de regiones</div>
<svg class="a" style="left:2877px;top:345px" width="18" height="14" viewBox="0 0 18 14"><path d="M2 3L9 10L16 3" fill="none" stroke="#222" stroke-width="2"/></svg>

<div class="row" style="top:438px"><div class="cb"><i></i><svg width="22" height="22" viewBox="0 0 22 22"><path d="M5 12L9.5 17.5L17 4" fill="none" stroke="#4a5aa6" stroke-width="3.2" stroke-linecap="round" stroke-linejoin="round"/></svg></div><div class="nm" style="transform:scaleX(1.141)">Batprueba</div><div class="ct">(3)</div><svg class="ed" width="32" height="30" viewBox="0 0 32 30"><path d="M5 1.5H22.5L27 6V27.5H5Z" fill="#f8f8f8" stroke="#7a7a7a" stroke-width="1.8" stroke-linejoin="round"/><path d="M17 6l3 3M19 11l2 1M21 15h2M20 20h3" stroke="#c8c8c8" stroke-width="1.4"/><path d="M1.8 4.8L18 21.5" stroke="#4a4030" stroke-width="5.4" stroke-linecap="round"/><path d="M2.3 5.3L16.5 20" stroke="#eaa92c" stroke-width="3" stroke-linecap="round"/><path d="M15.5 19L19.5 23" stroke="#8a8a8a" stroke-width="3"/><circle cx="2.8" cy="4.8" r="2" fill="#d84040"/></svg><svg class="xx" width="16" height="16" viewBox="0 0 18 18"><path d="M2 2L16 16M16 2L2 16" stroke="#e03a34" stroke-width="2.6"/></svg><div class="ar"></div></div>
<div class="row" style="top:514px"><div class="cb"><i></i><svg width="22" height="22" viewBox="0 0 22 22"><path d="M5 12L9.5 17.5L17 4" fill="none" stroke="#4a5aa6" stroke-width="3.2" stroke-linecap="round" stroke-linejoin="round"/></svg></div><div class="nm" style="transform:scaleX(1.15)">Centrales</div><div class="ct">(2)</div><svg class="ed" width="32" height="30" viewBox="0 0 32 30"><path d="M5 1.5H22.5L27 6V27.5H5Z" fill="#f8f8f8" stroke="#7a7a7a" stroke-width="1.8" stroke-linejoin="round"/><path d="M17 6l3 3M19 11l2 1M21 15h2M20 20h3" stroke="#c8c8c8" stroke-width="1.4"/><path d="M1.8 4.8L18 21.5" stroke="#4a4030" stroke-width="5.4" stroke-linecap="round"/><path d="M2.3 5.3L16.5 20" stroke="#eaa92c" stroke-width="3" stroke-linecap="round"/><path d="M15.5 19L19.5 23" stroke="#8a8a8a" stroke-width="3"/><circle cx="2.8" cy="4.8" r="2" fill="#d84040"/></svg><svg class="xx" width="16" height="16" viewBox="0 0 18 18"><path d="M2 2L16 16M16 2L2 16" stroke="#e03a34" stroke-width="2.6"/></svg><div class="ar"></div></div>
<div class="row" style="top:590px"><div class="cb"><i></i><svg width="22" height="22" viewBox="0 0 22 22"><path d="M5 12L9.5 17.5L17 4" fill="none" stroke="#4a5aa6" stroke-width="3.2" stroke-linecap="round" stroke-linejoin="round"/></svg></div><div class="nm" style="transform:scaleX(1.169)">centro</div><div class="ct">(7)</div><svg class="ed" width="32" height="30" viewBox="0 0 32 30"><path d="M5 1.5H22.5L27 6V27.5H5Z" fill="#f8f8f8" stroke="#7a7a7a" stroke-width="1.8" stroke-linejoin="round"/><path d="M17 6l3 3M19 11l2 1M21 15h2M20 20h3" stroke="#c8c8c8" stroke-width="1.4"/><path d="M1.8 4.8L18 21.5" stroke="#4a4030" stroke-width="5.4" stroke-linecap="round"/><path d="M2.3 5.3L16.5 20" stroke="#eaa92c" stroke-width="3" stroke-linecap="round"/><path d="M15.5 19L19.5 23" stroke="#8a8a8a" stroke-width="3"/><circle cx="2.8" cy="4.8" r="2" fill="#d84040"/></svg><svg class="xx" width="16" height="16" viewBox="0 0 18 18"><path d="M2 2L16 16M16 2L2 16" stroke="#e03a34" stroke-width="2.6"/></svg><div class="ar"></div></div>
<div class="row" style="top:666px"><div class="cb"><i></i><svg width="22" height="22" viewBox="0 0 22 22"><path d="M5 12L9.5 17.5L17 4" fill="none" stroke="#4a5aa6" stroke-width="3.2" stroke-linecap="round" stroke-linejoin="round"/></svg></div><div class="nm" style="transform:scaleX(1.124)">codigos postales</div><div class="ct">(7)</div><svg class="ed" width="32" height="30" viewBox="0 0 32 30"><path d="M5 1.5H22.5L27 6V27.5H5Z" fill="#f8f8f8" stroke="#7a7a7a" stroke-width="1.8" stroke-linejoin="round"/><path d="M17 6l3 3M19 11l2 1M21 15h2M20 20h3" stroke="#c8c8c8" stroke-width="1.4"/><path d="M1.8 4.8L18 21.5" stroke="#4a4030" stroke-width="5.4" stroke-linecap="round"/><path d="M2.3 5.3L16.5 20" stroke="#eaa92c" stroke-width="3" stroke-linecap="round"/><path d="M15.5 19L19.5 23" stroke="#8a8a8a" stroke-width="3"/><circle cx="2.8" cy="4.8" r="2" fill="#d84040"/></svg><svg class="xx" width="16" height="16" viewBox="0 0 18 18"><path d="M2 2L16 16M16 2L2 16" stroke="#e03a34" stroke-width="2.6"/></svg><div class="ar"></div></div>
<div class="row" style="top:742px"><div class="cb"><i></i><svg width="22" height="22" viewBox="0 0 22 22"><path d="M5 12L9.5 17.5L17 4" fill="none" stroke="#4a5aa6" stroke-width="3.2" stroke-linecap="round" stroke-linejoin="round"/></svg></div><div class="nm" style="transform:scaleX(1.114)">colegios</div><div class="ct">(4)</div><svg class="ed" width="32" height="30" viewBox="0 0 32 30"><path d="M5 1.5H22.5L27 6V27.5H5Z" fill="#f8f8f8" stroke="#7a7a7a" stroke-width="1.8" stroke-linejoin="round"/><path d="M17 6l3 3M19 11l2 1M21 15h2M20 20h3" stroke="#c8c8c8" stroke-width="1.4"/><path d="M1.8 4.8L18 21.5" stroke="#4a4030" stroke-width="5.4" stroke-linecap="round"/><path d="M2.3 5.3L16.5 20" stroke="#eaa92c" stroke-width="3" stroke-linecap="round"/><path d="M15.5 19L19.5 23" stroke="#8a8a8a" stroke-width="3"/><circle cx="2.8" cy="4.8" r="2" fill="#d84040"/></svg><svg class="xx" width="16" height="16" viewBox="0 0 18 18"><path d="M2 2L16 16M16 2L2 16" stroke="#e03a34" stroke-width="2.6"/></svg><div class="ar"></div></div>
<div class="row" style="top:818px"><div class="cb"><i></i><svg width="22" height="22" viewBox="0 0 22 22"><path d="M5 12L9.5 17.5L17 4" fill="none" stroke="#4a5aa6" stroke-width="3.2" stroke-linecap="round" stroke-linejoin="round"/></svg></div><div class="nm" style="transform:scaleX(1.149)">Distribucion</div><div class="ct">(2)</div><svg class="ed" width="32" height="30" viewBox="0 0 32 30"><path d="M5 1.5H22.5L27 6V27.5H5Z" fill="#f8f8f8" stroke="#7a7a7a" stroke-width="1.8" stroke-linejoin="round"/><path d="M17 6l3 3M19 11l2 1M21 15h2M20 20h3" stroke="#c8c8c8" stroke-width="1.4"/><path d="M1.8 4.8L18 21.5" stroke="#4a4030" stroke-width="5.4" stroke-linecap="round"/><path d="M2.3 5.3L16.5 20" stroke="#eaa92c" stroke-width="3" stroke-linecap="round"/><path d="M15.5 19L19.5 23" stroke="#8a8a8a" stroke-width="3"/><circle cx="2.8" cy="4.8" r="2" fill="#d84040"/></svg><svg class="xx" width="16" height="16" viewBox="0 0 18 18"><path d="M2 2L16 16M16 2L2 16" stroke="#e03a34" stroke-width="2.6"/></svg><div class="ar"></div></div>
<div class="row" style="top:894px"><div class="cb"><i></i><svg width="22" height="22" viewBox="0 0 22 22"><path d="M5 12L9.5 17.5L17 4" fill="none" stroke="#4a5aa6" stroke-width="3.2" stroke-linecap="round" stroke-linejoin="round"/></svg></div><div class="nm" style="transform:scaleX(1.134)">escuelas</div><div class="ct">(1)</div><svg class="ed" width="32" height="30" viewBox="0 0 32 30"><path d="M5 1.5H22.5L27 6V27.5H5Z" fill="#f8f8f8" stroke="#7a7a7a" stroke-width="1.8" stroke-linejoin="round"/><path d="M17 6l3 3M19 11l2 1M21 15h2M20 20h3" stroke="#c8c8c8" stroke-width="1.4"/><path d="M1.8 4.8L18 21.5" stroke="#4a4030" stroke-width="5.4" stroke-linecap="round"/><path d="M2.3 5.3L16.5 20" stroke="#eaa92c" stroke-width="3" stroke-linecap="round"/><path d="M15.5 19L19.5 23" stroke="#8a8a8a" stroke-width="3"/><circle cx="2.8" cy="4.8" r="2" fill="#d84040"/></svg><svg class="xx" width="16" height="16" viewBox="0 0 18 18"><path d="M2 2L16 16M16 2L2 16" stroke="#e03a34" stroke-width="2.6"/></svg><div class="ar"></div></div>
<div class="row" style="top:970px"><div class="cb"><i></i><svg width="22" height="22" viewBox="0 0 22 22"><path d="M5 12L9.5 17.5L17 4" fill="none" stroke="#4a5aa6" stroke-width="3.2" stroke-linecap="round" stroke-linejoin="round"/></svg></div><div class="nm" style="transform:scaleX(1.135)">Estrella</div><div class="ct">(1)</div><svg class="ed" width="32" height="30" viewBox="0 0 32 30"><path d="M5 1.5H22.5L27 6V27.5H5Z" fill="#f8f8f8" stroke="#7a7a7a" stroke-width="1.8" stroke-linejoin="round"/><path d="M17 6l3 3M19 11l2 1M21 15h2M20 20h3" stroke="#c8c8c8" stroke-width="1.4"/><path d="M1.8 4.8L18 21.5" stroke="#4a4030" stroke-width="5.4" stroke-linecap="round"/><path d="M2.3 5.3L16.5 20" stroke="#eaa92c" stroke-width="3" stroke-linecap="round"/><path d="M15.5 19L19.5 23" stroke="#8a8a8a" stroke-width="3"/><circle cx="2.8" cy="4.8" r="2" fill="#d84040"/></svg><svg class="xx" width="16" height="16" viewBox="0 0 18 18"><path d="M2 2L16 16M16 2L2 16" stroke="#e03a34" stroke-width="2.6"/></svg><div class="ar"></div></div>
<div class="row" style="top:1046px"><div class="cb"><i></i><svg width="22" height="22" viewBox="0 0 22 22"><path d="M5 12L9.5 17.5L17 4" fill="none" stroke="#4a5aa6" stroke-width="3.2" stroke-linecap="round" stroke-linejoin="round"/></svg></div><div class="nm" style="transform:scaleX(1.036)">GSC</div><div class="ct">(7)</div><svg class="ed" width="32" height="30" viewBox="0 0 32 30"><path d="M5 1.5H22.5L27 6V27.5H5Z" fill="#f8f8f8" stroke="#7a7a7a" stroke-width="1.8" stroke-linejoin="round"/><path d="M17 6l3 3M19 11l2 1M21 15h2M20 20h3" stroke="#c8c8c8" stroke-width="1.4"/><path d="M1.8 4.8L18 21.5" stroke="#4a4030" stroke-width="5.4" stroke-linecap="round"/><path d="M2.3 5.3L16.5 20" stroke="#eaa92c" stroke-width="3" stroke-linecap="round"/><path d="M15.5 19L19.5 23" stroke="#8a8a8a" stroke-width="3"/><circle cx="2.8" cy="4.8" r="2" fill="#d84040"/></svg><svg class="xx" width="16" height="16" viewBox="0 0 18 18"><path d="M2 2L16 16M16 2L2 16" stroke="#e03a34" stroke-width="2.6"/></svg><div class="ar"></div></div>
<div class="row" style="top:1122px"><div class="cb"><i></i><svg width="22" height="22" viewBox="0 0 22 22"><path d="M5 12L9.5 17.5L17 4" fill="none" stroke="#4a5aa6" stroke-width="3.2" stroke-linecap="round" stroke-linejoin="round"/></svg></div><div class="nm" style="transform:scaleX(1.191)">norte</div><div class="ct">(1)</div><svg class="ed" width="32" height="30" viewBox="0 0 32 30"><path d="M5 1.5H22.5L27 6V27.5H5Z" fill="#f8f8f8" stroke="#7a7a7a" stroke-width="1.8" stroke-linejoin="round"/><path d="M17 6l3 3M19 11l2 1M21 15h2M20 20h3" stroke="#c8c8c8" stroke-width="1.4"/><path d="M1.8 4.8L18 21.5" stroke="#4a4030" stroke-width="5.4" stroke-linecap="round"/><path d="M2.3 5.3L16.5 20" stroke="#eaa92c" stroke-width="3" stroke-linecap="round"/><path d="M15.5 19L19.5 23" stroke="#8a8a8a" stroke-width="3"/><circle cx="2.8" cy="4.8" r="2" fill="#d84040"/></svg><svg class="xx" width="16" height="16" viewBox="0 0 18 18"><path d="M2 2L16 16M16 2L2 16" stroke="#e03a34" stroke-width="2.6"/></svg><div class="ar"></div></div>
<div class="row" style="top:1198px"><div class="cb"><i></i><svg width="22" height="22" viewBox="0 0 22 22"><path d="M5 12L9.5 17.5L17 4" fill="none" stroke="#4a5aa6" stroke-width="3.2" stroke-linecap="round" stroke-linejoin="round"/></svg></div><div class="nm" style="transform:scaleX(1.163)">obligatoria</div><div class="ct">(1)</div><svg class="ed" width="32" height="30" viewBox="0 0 32 30"><path d="M5 1.5H22.5L27 6V27.5H5Z" fill="#f8f8f8" stroke="#7a7a7a" stroke-width="1.8" stroke-linejoin="round"/><path d="M17 6l3 3M19 11l2 1M21 15h2M20 20h3" stroke="#c8c8c8" stroke-width="1.4"/><path d="M1.8 4.8L18 21.5" stroke="#4a4030" stroke-width="5.4" stroke-linecap="round"/><path d="M2.3 5.3L16.5 20" stroke="#eaa92c" stroke-width="3" stroke-linecap="round"/><path d="M15.5 19L19.5 23" stroke="#8a8a8a" stroke-width="3"/><circle cx="2.8" cy="4.8" r="2" fill="#d84040"/></svg><svg class="xx" width="16" height="16" viewBox="0 0 18 18"><path d="M2 2L16 16M16 2L2 16" stroke="#e03a34" stroke-width="2.6"/></svg><div class="ar"></div></div>
<div class="row" style="top:1274px"><div class="cb"><i></i><svg width="22" height="22" viewBox="0 0 22 22"><path d="M5 12L9.5 17.5L17 4" fill="none" stroke="#4a5aa6" stroke-width="3.2" stroke-linecap="round" stroke-linejoin="round"/></svg></div><div class="nm" style="transform:scaleX(1.147)">Obligatorios</div><div class="ct">(0)</div><svg class="ed" width="32" height="30" viewBox="0 0 32 30"><path d="M5 1.5H22.5L27 6V27.5H5Z" fill="#f8f8f8" stroke="#7a7a7a" stroke-width="1.8" stroke-linejoin="round"/><path d="M17 6l3 3M19 11l2 1M21 15h2M20 20h3" stroke="#c8c8c8" stroke-width="1.4"/><path d="M1.8 4.8L18 21.5" stroke="#4a4030" stroke-width="5.4" stroke-linecap="round"/><path d="M2.3 5.3L16.5 20" stroke="#eaa92c" stroke-width="3" stroke-linecap="round"/><path d="M15.5 19L19.5 23" stroke="#8a8a8a" stroke-width="3"/><circle cx="2.8" cy="4.8" r="2" fill="#d84040"/></svg><svg class="xx" width="16" height="16" viewBox="0 0 18 18"><path d="M2 2L16 16M16 2L2 16" stroke="#e03a34" stroke-width="2.6"/></svg><div class="ar"></div></div>
<div class="row" style="top:1350px"><div class="cb"><i></i><svg width="22" height="22" viewBox="0 0 22 22"><path d="M5 12L9.5 17.5L17 4" fill="none" stroke="#4a5aa6" stroke-width="3.2" stroke-linecap="round" stroke-linejoin="round"/></svg></div><div class="nm" style="transform:scaleX(1.155)">prueba</div><div class="ct">(25)</div><svg class="ed" width="32" height="30" viewBox="0 0 32 30"><path d="M5 1.5H22.5L27 6V27.5H5Z" fill="#f8f8f8" stroke="#7a7a7a" stroke-width="1.8" stroke-linejoin="round"/><path d="M17 6l3 3M19 11l2 1M21 15h2M20 20h3" stroke="#c8c8c8" stroke-width="1.4"/><path d="M1.8 4.8L18 21.5" stroke="#4a4030" stroke-width="5.4" stroke-linecap="round"/><path d="M2.3 5.3L16.5 20" stroke="#eaa92c" stroke-width="3" stroke-linecap="round"/><path d="M15.5 19L19.5 23" stroke="#8a8a8a" stroke-width="3"/><circle cx="2.8" cy="4.8" r="2" fill="#d84040"/></svg><svg class="xx" width="16" height="16" viewBox="0 0 18 18"><path d="M2 2L16 16M16 2L2 16" stroke="#e03a34" stroke-width="2.6"/></svg><div class="ar"></div></div>
<div class="row" style="top:1426px"><div class="cb"><i></i><svg width="22" height="22" viewBox="0 0 22 22"><path d="M5 12L9.5 17.5L17 4" fill="none" stroke="#4a5aa6" stroke-width="3.2" stroke-linecap="round" stroke-linejoin="round"/></svg></div><div class="nm" style="transform:scaleX(1.148)">regiones demo</div><div class="ct">(6)</div><svg class="ed" width="32" height="30" viewBox="0 0 32 30"><path d="M5 1.5H22.5L27 6V27.5H5Z" fill="#f8f8f8" stroke="#7a7a7a" stroke-width="1.8" stroke-linejoin="round"/><path d="M17 6l3 3M19 11l2 1M21 15h2M20 20h3" stroke="#c8c8c8" stroke-width="1.4"/><path d="M1.8 4.8L18 21.5" stroke="#4a4030" stroke-width="5.4" stroke-linecap="round"/><path d="M2.3 5.3L16.5 20" stroke="#eaa92c" stroke-width="3" stroke-linecap="round"/><path d="M15.5 19L19.5 23" stroke="#8a8a8a" stroke-width="3"/><circle cx="2.8" cy="4.8" r="2" fill="#d84040"/></svg><svg class="xx" width="16" height="16" viewBox="0 0 18 18"><path d="M2 2L16 16M16 2L2 16" stroke="#e03a34" stroke-width="2.6"/></svg><div class="ar"></div></div>
<div class="row" style="top:1502px"><div class="cb"><i></i><svg width="22" height="22" viewBox="0 0 22 22"><path d="M5 12L9.5 17.5L17 4" fill="none" stroke="#4a5aa6" stroke-width="3.2" stroke-linecap="round" stroke-linejoin="round"/></svg></div><div class="nm" style="transform:scaleX(1.086)">Zonas GAROE</div><div class="ct">(1)</div><svg class="ed" width="32" height="30" viewBox="0 0 32 30"><path d="M5 1.5H22.5L27 6V27.5H5Z" fill="#f8f8f8" stroke="#7a7a7a" stroke-width="1.8" stroke-linejoin="round"/><path d="M17 6l3 3M19 11l2 1M21 15h2M20 20h3" stroke="#c8c8c8" stroke-width="1.4"/><path d="M1.8 4.8L18 21.5" stroke="#4a4030" stroke-width="5.4" stroke-linecap="round"/><path d="M2.3 5.3L16.5 20" stroke="#eaa92c" stroke-width="3" stroke-linecap="round"/><path d="M15.5 19L19.5 23" stroke="#8a8a8a" stroke-width="3"/><circle cx="2.8" cy="4.8" r="2" fill="#d84040"/></svg><svg class="xx" width="16" height="16" viewBox="0 0 18 18"><path d="M2 2L16 16M16 2L2 16" stroke="#e03a34" stroke-width="2.6"/></svg><div class="ar"></div></div>
<div class="row" style="top:1578px"><div class="cb"><i></i><svg width="22" height="22" viewBox="0 0 22 22"><path d="M5 12L9.5 17.5L17 4" fill="none" stroke="#4a5aa6" stroke-width="3.2" stroke-linecap="round" stroke-linejoin="round"/></svg></div><div class="nm" style="transform:scaleX(1.148)">Áreas de Distribución</div><div class="ct">(3)</div><svg class="ed" width="32" height="30" viewBox="0 0 32 30"><path d="M5 1.5H22.5L27 6V27.5H5Z" fill="#f8f8f8" stroke="#7a7a7a" stroke-width="1.8" stroke-linejoin="round"/><path d="M17 6l3 3M19 11l2 1M21 15h2M20 20h3" stroke="#c8c8c8" stroke-width="1.4"/><path d="M1.8 4.8L18 21.5" stroke="#4a4030" stroke-width="5.4" stroke-linecap="round"/><path d="M2.3 5.3L16.5 20" stroke="#eaa92c" stroke-width="3" stroke-linecap="round"/><path d="M15.5 19L19.5 23" stroke="#8a8a8a" stroke-width="3"/><circle cx="2.8" cy="4.8" r="2" fill="#d84040"/></svg><svg class="xx" width="16" height="16" viewBox="0 0 18 18"><path d="M2 2L16 16M16 2L2 16" stroke="#e03a34" stroke-width="2.6"/></svg><div class="ar"></div></div>
<div class="a" style="left:2868px;top:1806px;width:110px;height:110px;border-radius:50%;background:linear-gradient(#2c2c2c,#9c9c9c);box-shadow:0 2px 12px rgba(0,0,0,.22)"></div>
<svg class="a" style="left:2868px;top:1806px" width="110" height="110" viewBox="0 0 110 110"><path d="M24.2 53.8 A20 20 0 1 1 39.5 66.7 L23.5 68.5 Z" fill="#fff"/><path d="M81.8 69.5 A20.5 20.5 0 1 0 66.1 82.7 L83.5 84.5 Z" fill="#fff" stroke="#555" stroke-width="6.5" paint-order="stroke"/></svg>
<!-- DIALOG -->
<div class="a" style="left:1250px;top:444px;width:572px;height:1028px;border-radius:17px 17px 10px 10px;box-shadow:-5px 6px 9px rgba(0,40,60,.45)"></div>
<div class="a" style="left:1250px;top:444px;width:572px;height:1028px;background:#e5ebf3;border-radius:17px 17px 10px 10px;overflow:hidden">
<div class="a" style="left:0;top:0;width:572px;height:69px;background:linear-gradient(#e6ecf3,#d3dbe4)"></div>
<div class="a" style="left:0;top:69px;width:572px;height:3px;background:#fbfcfe"></div>
</div>
<div class="t" style="transform:scaleX(1.013);transform-origin:0 0;left:1268px;top:461.5px;font-size:31px;color:#2e2e2e">Edición de regiones</div>
<svg class="a" style="left:1754px;top:454px" width="48" height="48" viewBox="0 0 48 48"><circle cx="24" cy="24" r="21" fill="none" stroke="#b6b6b6" stroke-width="1.8"/><path d="M15 15L33 33M33 15L15 33" stroke="#a8a8a8" stroke-width="4" stroke-linecap="round"/></svg>
<div class="band" style="top:516px;height:71px"></div>
<div class="lbl" style="transform:scaleX(1.182);transform-origin:0 0;top:542px">Nombre región</div>
<div class="cont" style="top:587px;height:88px"></div>
<div class="a" style="left:1276px;top:609px;width:490px;height:46px;background:#fff;border:2px solid #969696"></div>
<div class="t" style="transform:scaleX(1.174);transform-origin:0 0;left:1288px;top:622px;font-size:25px;color:#767676">Nombre</div>
<div class="band" style="top:675px;height:71px"></div>
<div class="lbl" style="transform:scaleX(1.133);transform-origin:0 0;top:701px">Tipo</div>
<div class="cont" style="top:746px;height:93px"></div>
<div class="a" style="left:1276px;top:767px;width:300px;height:50px;background:#fff;border:2px solid #969696"></div>
<div class="t" style="transform:scaleX(1.159);transform-origin:0 0;left:1296px;top:781px;font-size:27px">-- Elija un tipo --</div>
<svg class="a" style="left:1549px;top:785px" width="18" height="14" viewBox="0 0 18 14"><path d="M2 3L9 10L16 3" fill="none" stroke="#222" stroke-width="2"/></svg>
<div class="t" style="transform:scaleX(1.157);transform-origin:0 0;left:1607px;top:784px;font-size:21px;color:#4a7ab8">[ Añadir tipo ]</div>
<div class="band" style="top:839px;height:72px"></div>
<div class="lbl" style="transform:scaleX(1.133);transform-origin:0 0;top:865px">Estancia</div>
<div class="cont" style="top:911px;height:90px"></div>
<div class="a" style="left:1276px;top:932px;width:266px;height:49px;background:linear-gradient(#e8e8e8 0,#fff 12px);border:2px solid #969696"></div>
<div class="t" style="left:1288px;top:946px;font-size:25px">0</div>
<div class="a" style="left:1542px;top:931px;width:34px;height:24px;border:1.5px solid #b8bacc;border-left:none;background:linear-gradient(#fff,#e6e6e6)"></div>
<div class="a" style="left:1542px;top:957px;width:34px;height:24px;border:1.5px solid #b8bacc;border-left:none;background:#d6d6d6"></div>
<svg class="a" style="left:1548px;top:934px" width="22" height="44" viewBox="0 0 22 44"><path d="M3 12L11 4L19 12" fill="none" stroke="#3c5a98" stroke-width="3.5"/><path d="M3 32L11 40L19 32" fill="none" stroke="#3c5a98" stroke-width="3.5"/></svg>
<div class="t" style="transform:scaleX(1.105);transform-origin:0 0;left:1595px;top:945px;font-size:22px">Minutos</div>
<div class="band" style="top:1001px;height:72px"></div>
<div class="lbl" style="transform:scaleX(1.171);transform-origin:0 0;top:1027px">Control de Velocidad</div>
<div class="cont" style="top:1073px;height:90px"></div>
<div class="a" style="left:1276px;top:1094px;width:266px;height:49px;background:linear-gradient(#e8e8e8 0,#fff 12px);border:2px solid #969696"></div>
<div class="t" style="left:1288px;top:1108px;font-size:25px">0</div>
<div class="a" style="left:1542px;top:1093px;width:34px;height:24px;border:1.5px solid #b8bacc;border-left:none;background:linear-gradient(#fff,#e6e6e6)"></div>
<div class="a" style="left:1542px;top:1119px;width:34px;height:24px;border:1.5px solid #b8bacc;border-left:none;background:#d6d6d6"></div>
<svg class="a" style="left:1548px;top:1096px" width="22" height="44" viewBox="0 0 22 44"><path d="M3 12L11 4L19 12" fill="none" stroke="#3c5a98" stroke-width="3.5"/><path d="M3 32L11 40L19 32" fill="none" stroke="#3c5a98" stroke-width="3.5"/></svg>
<div class="t" style="transform:scaleX(1.204);transform-origin:0 0;left:1595px;top:1107px;font-size:22px">Km/h</div>
<div class="band" style="top:1163px;height:72px"></div>
<div class="lbl" style="transform:scaleX(1.13);transform-origin:0 0;top:1189px">Asignación</div>
<div class="t" style="transform:scaleX(1.111);transform-origin:0 0;left:1277px;top:1264px;font-size:22px;color:#47a82a">Autorizados</div>
<div class="a" style="left:1490px;top:1272px;width:8px;height:8px;border-radius:50%;background:#47a82a"></div>
<div class="t" style="left:1527px;top:1264px;font-size:22px;color:#47a82a">0</div>
<div class="t" style="transform:scaleX(1.095);transform-origin:0 0;left:1275px;top:1305px;font-size:22px;color:#b52424">Prohibidos</div>
<div class="a" style="left:1490px;top:1313px;width:8px;height:8px;border-radius:50%;background:#b52424"></div>
<div class="t" style="left:1527px;top:1305px;font-size:22px;color:#b52424">0</div>
<div class="a" style="left:1250px;top:1366px;width:572px;height:76px;background:#acafb1"></div>
<div class="btn" style="left:1323px;width:192px"><span style="display:inline-block;transform:scaleX(1.092)">Borrar vértices</span></div>
<div class="btn" style="left:1525px;width:131px"><span style="display:inline-block;transform:scaleX(1.031)">Cancelar</span></div>
<div class="btn" style="left:1666px;width:126px"><span style="display:inline-block;transform:scaleX(1.058)">Guardar</span></div>
<div class="a" style="left:0;top:1993px;width:3058px;height:3px;background:rgba(255,255,255,.28);z-index:45"><!--bottomstrip--></div>
<!-- annotations -->
<svg class="a" style="left:0;top:0;z-index:40" width="3058" height="1996" viewBox="0 0 3058 1996">
<g fill="none" stroke="#e8402a" stroke-width="5.5">
<rect x="32.75" y="74.75" width="98.5" height="60.5"/>
<rect x="347" y="663" width="676" height="540"/>
<rect x="1247.5" y="441.5" width="577" height="1032"/>
<path d="M136 142.5 L1214 712"/>
</g>
<path d="M1236 723 L1205 725 L1221 696 Z" fill="#e8402a"/>
</svg>
</body></html>
